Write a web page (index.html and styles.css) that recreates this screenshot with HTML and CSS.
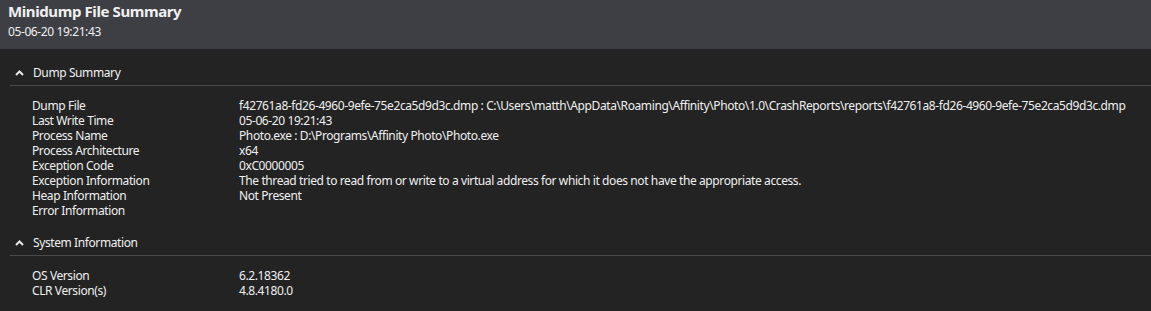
FILE: index.html
```html
<!DOCTYPE html>
<html lang="en">
<head>
    <meta charset="UTF-8">
    <title>Minidump File Summary</title>
    <link rel="stylesheet" href="styles.css">
</head>
<body>
    <div class="header">
        <div class="title">Minidump File Summary</div>
        <div class="subtitle">05-06-20 19:21:43</div>
    </div>

    <!-- Dump Summary -->
    <div class="section">
        <div class="section-head">
            <svg class="caret" width="9" height="6" viewBox="0 0 9 6"><path d="M1 5 L4.5 1.5 L8 5" fill="none" stroke="#e8e8e8" stroke-width="2"/></svg>
            <span>Dump Summary</span>
        </div>
        <div class="rows">
            <div class="label">Dump File</div><div class="value">f42761a8-fd26-4960-9efe-75e2ca5d9d3c.dmp : C:\Users\matth\AppData\Roaming\Affinity\Photo\1.0\CrashReports\reports\f42761a8-fd26-4960-9efe-75e2ca5d9d3c.dmp</div>
            <div class="label">Last Write Time</div><div class="value">05-06-20 19:21:43</div>
            <div class="label">Process Name</div><div class="value">Photo.exe : D:\Programs\Affinity Photo\Photo.exe</div>
            <div class="label">Process Architecture</div><div class="value">x64</div>
            <div class="label">Exception Code</div><div class="value">0xC0000005</div>
            <div class="label">Exception Information</div><div class="value">The thread tried to read from or write to a virtual address for which it does not have the appropriate access.</div>
            <div class="label">Heap Information</div><div class="value">Not Present</div>
            <div class="label">Error Information</div><div class="value"></div>
        </div>
    </div>

    <!-- System Information -->
    <div class="section">
        <div class="section-head">
            <svg class="caret" width="9" height="6" viewBox="0 0 9 6"><path d="M1 5 L4.5 1.5 L8 5" fill="none" stroke="#e8e8e8" stroke-width="2"/></svg>
            <span>System Information</span>
        </div>
        <div class="rows">
            <div class="label">OS Version</div><div class="value">6.2.18362</div>
            <div class="label">CLR Version(s)</div><div class="value">4.8.4180.0</div>
        </div>
    </div>
</body>
</html>
```

FILE: styles.css
```css
/* Dark minidump viewer */

body {
    margin: 0;
    background-color: #232323;
    color: #f0f0f0;
    font-family: "Noto Sans", "Open Sans", sans-serif;
    font-size: 12px;
    letter-spacing: -0.4px;
    overflow: hidden;
}

.header {
    height: 49px;
    box-sizing: border-box;
    padding: 1px 8px 0 8px;
    background-color: #3e3f44;
}

.title {
    font-size: 15px;
    font-weight: bold;
    line-height: 21px;
}

.subtitle {
    line-height: 20px;
}

.section-head {
    display: flex;
    align-items: center;
    gap: 9px;
    margin-left: 10px;
    padding: 16px 0 4px 5px;
    border-bottom: 1px solid #4a4a4a;
    line-height: 16px;
}

.rows {
    display: grid;
    grid-template-columns: 207px 1fr;
    padding: 12px 0 1px 32px;
    line-height: 15px;
    white-space: nowrap;
}
```
